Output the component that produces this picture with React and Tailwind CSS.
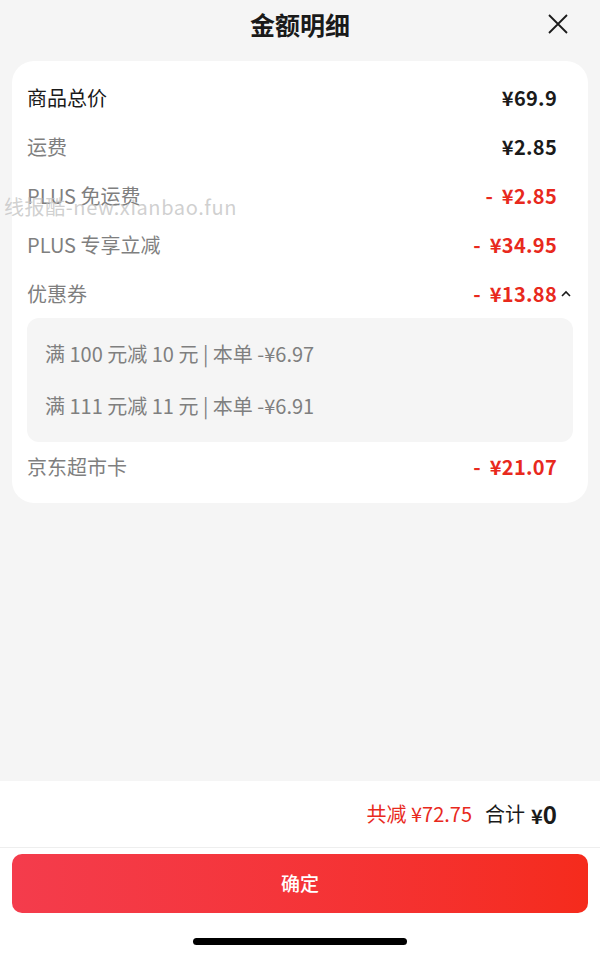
const FONT = { fontFamily: '"Noto Sans CJK SC", "Noto Sans", sans-serif' };

function Row({ label, value, dark, red, caret }) {
  return (
    <div className="h-[49px] flex items-center justify-between">
      <span className={`text-[20px] ${dark ? 'text-[#1a1a1a]' : 'text-[#7f7f7f]'}`}>{label}</span>
      <span className="flex items-center">
        {red && <span className="text-[20px] font-bold text-[#e8291d] mr-[9px]">-</span>}
        <span className={`text-[20px] font-bold tracking-[0.3px] ${red ? 'text-[#e8291d]' : 'text-[#1a1a1a]'}`}>{value}</span>
        {caret && (
          <svg width="14" height="14" viewBox="0 0 14 14" className="ml-[2px] -mr-4">
            <path d="M3 9 L7 5 L11 9" fill="none" stroke="#1a1a1a" strokeWidth="1.6" />
          </svg>
        )}
      </span>
    </div>
  );
}

export default function App() {
  return (
    <div className="w-[600px] h-[964px] bg-white flex flex-col" style={FONT}>
      <div className="flex-1 bg-[#f5f5f5] relative">
        {/* Header */}
        <div className="h-[49px] relative flex items-center justify-center">
          <span className="text-[25px] font-bold text-[#1a1a1a]">金额明细</span>
          <svg width="22" height="22" viewBox="0 0 22 22" className="absolute right-[31px] top-[13px]">
            <path d="M2 2 L20 20 M20 2 L2 20" stroke="#1a1a1a" strokeWidth="1.8" />
          </svg>
        </div>

        {/* Card */}
        <div className="mx-[12px] mt-[12px] bg-white rounded-[22px] pl-[15px] pr-[31px] pt-[12px] pb-[12px]">
          <Row label="商品总价" value="¥69.9" dark />
          <Row label="运费" value="¥2.85" />
          <Row label="PLUS 免运费" value="¥2.85" red />
          <Row label="PLUS 专享立减" value="¥34.95" red />
          <Row label="优惠券" value="¥13.88" red caret />
          <div className="bg-[#f5f5f5] rounded-[12px] -mr-[16px] py-[10px] px-[18px]">
            <div className="h-[52px] flex items-center text-[20px] text-[#7f7f7f]">满 100 元减 10 元 | 本单 -¥6.97</div>
            <div className="h-[52px] flex items-center text-[20px] text-[#7f7f7f]">满 111 元减 11 元 | 本单 -¥6.91</div>
          </div>
          <Row label="京东超市卡" value="¥21.07" red />
        </div>

        {/* Watermark */}
        <div className="absolute left-[4px] top-[192px] text-[20px] tracking-[0.6px] text-[#c4c4c4]/80 pointer-events-none">
          线报酷-new.xianbao.fun
        </div>
      </div>

      {/* Total bar */}
      <div className="h-[67px] bg-white border-b border-[#eeeeee] flex items-center justify-end pr-[43px]">
        <span className="text-[20px] text-[#e8291d]">共减 ¥72.75</span>
        <span className="ml-[13px] text-[20px] text-[#1a1a1a]">合计</span>
        <span className="ml-[6px] text-[20px] font-bold text-[#1a1a1a]">¥<span className="text-[24px]">0</span></span>
      </div>

      {/* Button */}
      <div className="h-[116px] bg-white px-[12px] pt-[6px] flex flex-col">
        <button className="h-[59px] w-full rounded-[10px] bg-gradient-to-r from-[#f43c4c] to-[#f52b1c] text-white text-[19px] font-medium">
          确定
        </button>
        <div className="flex-1 flex items-center justify-center pt-[6px]">
          <div className="w-[214px] h-[7px] rounded-full bg-black" />
        </div>
      </div>
    </div>
  );
}
